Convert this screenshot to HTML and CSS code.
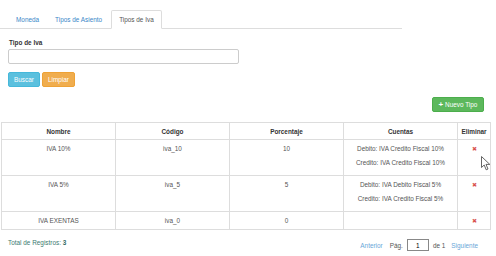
FILE: index.html
```html
<!DOCTYPE html>
<html lang="es">
<head>
  <meta charset="UTF-8">
  <title>Tipos de Iva</title>
  <link rel="stylesheet" href="styles.css">
</head>
<body>

  <ul class="tabs">
    <li><a href="#">Moneda</a></li>
    <li><a href="#">Tipos de Asiento</a></li>
    <li class="activo"><a href="#">Tipos de Iva</a></li>
  </ul>

  <div class="filtro">
    <label for="tipo">Tipo de Iva</label>
    <input type="text" id="tipo">
    <div class="acciones">
      <button class="btn btn-info">Buscar</button>
      <button class="btn btn-warning">Limpiar</button>
    </div>
  </div>

  <div class="barra">
    <button class="btn btn-success"><b>+</b> Nuevo Tipo</button>
  </div>

  <table class="tabla">
    <thead>
      <tr>
        <th class="c-nombre">Nombre</th>
        <th class="c-codigo">Código</th>
        <th class="c-porc">Porcentaje</th>
        <th class="c-cuentas">Cuentas</th>
        <th class="c-elim">Eliminar</th>
      </tr>
    </thead>
    <tbody>
      <tr>
        <td>IVA 10%</td>
        <td>iva_10</td>
        <td>10</td>
        <td><p>Debito: IVA Credito Fiscal 10%</p><p>Credito: IVA Credito Fiscal 10%</p></td>
        <td><span class="borrar">&#10006;</span></td>
      </tr>
      <tr>
        <td>IVA 5%</td>
        <td>iva_5</td>
        <td>5</td>
        <td><p>Debito: IVA Debito Fiscal 5%</p><p>Credito: IVA Credito Fiscal 5%</p></td>
        <td><span class="borrar">&#10006;</span></td>
      </tr>
      <tr>
        <td>IVA EXENTAS</td>
        <td>iva_0</td>
        <td>0</td>
        <td></td>
        <td><span class="borrar">&#10006;</span></td>
      </tr>
    </tbody>
  </table>

  <div class="pie">
    <span class="total">Total de Registros: <b>3</b></span>
    <div class="paginas">
      <a href="#">Anterior</a>
      <span>Pág.</span>
      <input type="text" value="1" class="pag-input">
      <span>de 1</span>
      <a href="#">Siguiente</a>
    </div>
  </div>

  <!-- puntero del mouse -->
  <svg class="cursor" width="10" height="15" viewBox="0 0 10 15">
    <path d="M0.5 0.5 L0.5 11.5 L3.2 9 L5.2 13.8 L7 13 L5 8.4 L8.8 8.4 Z" fill="#fff" stroke="#555" stroke-width="0.9" stroke-linejoin="round"/>
  </svg>

</body>
</html>
```

FILE: styles.css
```css
body {
  margin: 0;
  background: #fff;
  font-family: "Liberation Sans", Arial, sans-serif;
  font-size: 6.4px;
  line-height: 9px;
  color: #333;
  position: relative;
  width: 496px;
  height: 256px;
  overflow: hidden;
}

a {
  text-decoration: none;
}

.tabs {
  list-style: none;
  margin: 10px 0 0 0;
  padding: 0 0 0 8px;
  width: 394px;
  display: flex;
  border-bottom: 1px solid #ddd;
}

.tabs li {
  margin-right: 1px;
  margin-bottom: -1px;
}

.tabs a {
  display: block;
  padding: 4px 7px;
  line-height: 9px;
  color: #3a87c8;
  border: 1px solid transparent;
  border-radius: 2px 2px 0 0;
}

.tabs li:nth-child(2) a {
  padding-left: 6px;
}

.tabs li.activo a {
  color: #555;
  background: #fff;
  border-color: #ddd #ddd transparent;
}

.filtro {
  padding: 9px 8px 0 8px;
}

.filtro label {
  display: block;
  font-weight: bold;
  margin-left: 1px;
  margin-bottom: 2px;
}

.filtro input {
  display: block;
  box-sizing: border-box;
  width: 231px;
  height: 15px;
  border: 1px solid #ccc;
  border-radius: 2px;
  margin: 0;
}

.acciones {
  display: flex;
  gap: 2px;
  margin-top: 8px;
}

.btn {
  box-sizing: border-box;
  height: 15px;
  border: 1px solid transparent;
  border-radius: 2px;
  color: #fff;
  font-family: "Liberation Sans", Arial, sans-serif;
  font-size: 6.4px;
  padding: 0 4px;
  cursor: pointer;
}

.btn-info {
  width: 32px;
  background: #5bc0de;
  border-color: #46b8da;
}

.btn-warning {
  width: 33px;
  background: #f0ad4e;
  border-color: #eea236;
}

.btn-success {
  width: 52px;
  background: #5cb85c;
  border-color: #4cae4c;
}

.btn-success b {
  font-size: 8px;
}

.barra {
  display: flex;
  justify-content: flex-end;
  padding-right: 12px;
  margin-top: 10px;
}

.tabla {
  margin: 10px 0 0 1px;
  width: 490px;
  border-collapse: collapse;
  table-layout: fixed;
}

.tabla th,
.tabla td {
  box-sizing: border-box;
  border: 1px solid #ddd;
  padding: 3.5px 2px;
  line-height: 9px;
  text-align: center;
  vertical-align: top;
}

.tabla th {
  color: #333;
  font-weight: bold;
}

.tabla td {
  color: #555;
}

.tabla td p {
  margin: 0 0 5px 0;
}

.c-nombre { width: 114px; }
.c-codigo { width: 114px; }
.c-porc { width: 114px; }
.c-cuentas { width: 114px; }

.borrar {
  color: #d9534f;
  font-size: 6px;
}

.pie {
  display: flex;
  justify-content: space-between;
  align-items: flex-start;
  padding: 8px 18px 0 8px;
}

.total {
  color: #3d7a70;
}

.total b {
  color: #2f6a5f;
}

.paginas {
  display: flex;
  align-items: center;
  gap: 4px;
  margin-top: 1px;
  color: #555;
}

.paginas a {
  color: #6aa6d8;
}

.paginas a:first-child {
  margin-right: 3px;
}

.paginas a:last-child {
  margin-left: 2px;
}

.pag-input {
  box-sizing: border-box;
  width: 22px;
  height: 12px;
  border: 1px solid #888;
  font-family: "Liberation Sans", Arial, sans-serif;
  font-size: 6.4px;
  text-align: center;
  padding: 0;
  margin: 0;
}

.cursor {
  position: absolute;
  left: 481px;
  top: 156px;
}
```
